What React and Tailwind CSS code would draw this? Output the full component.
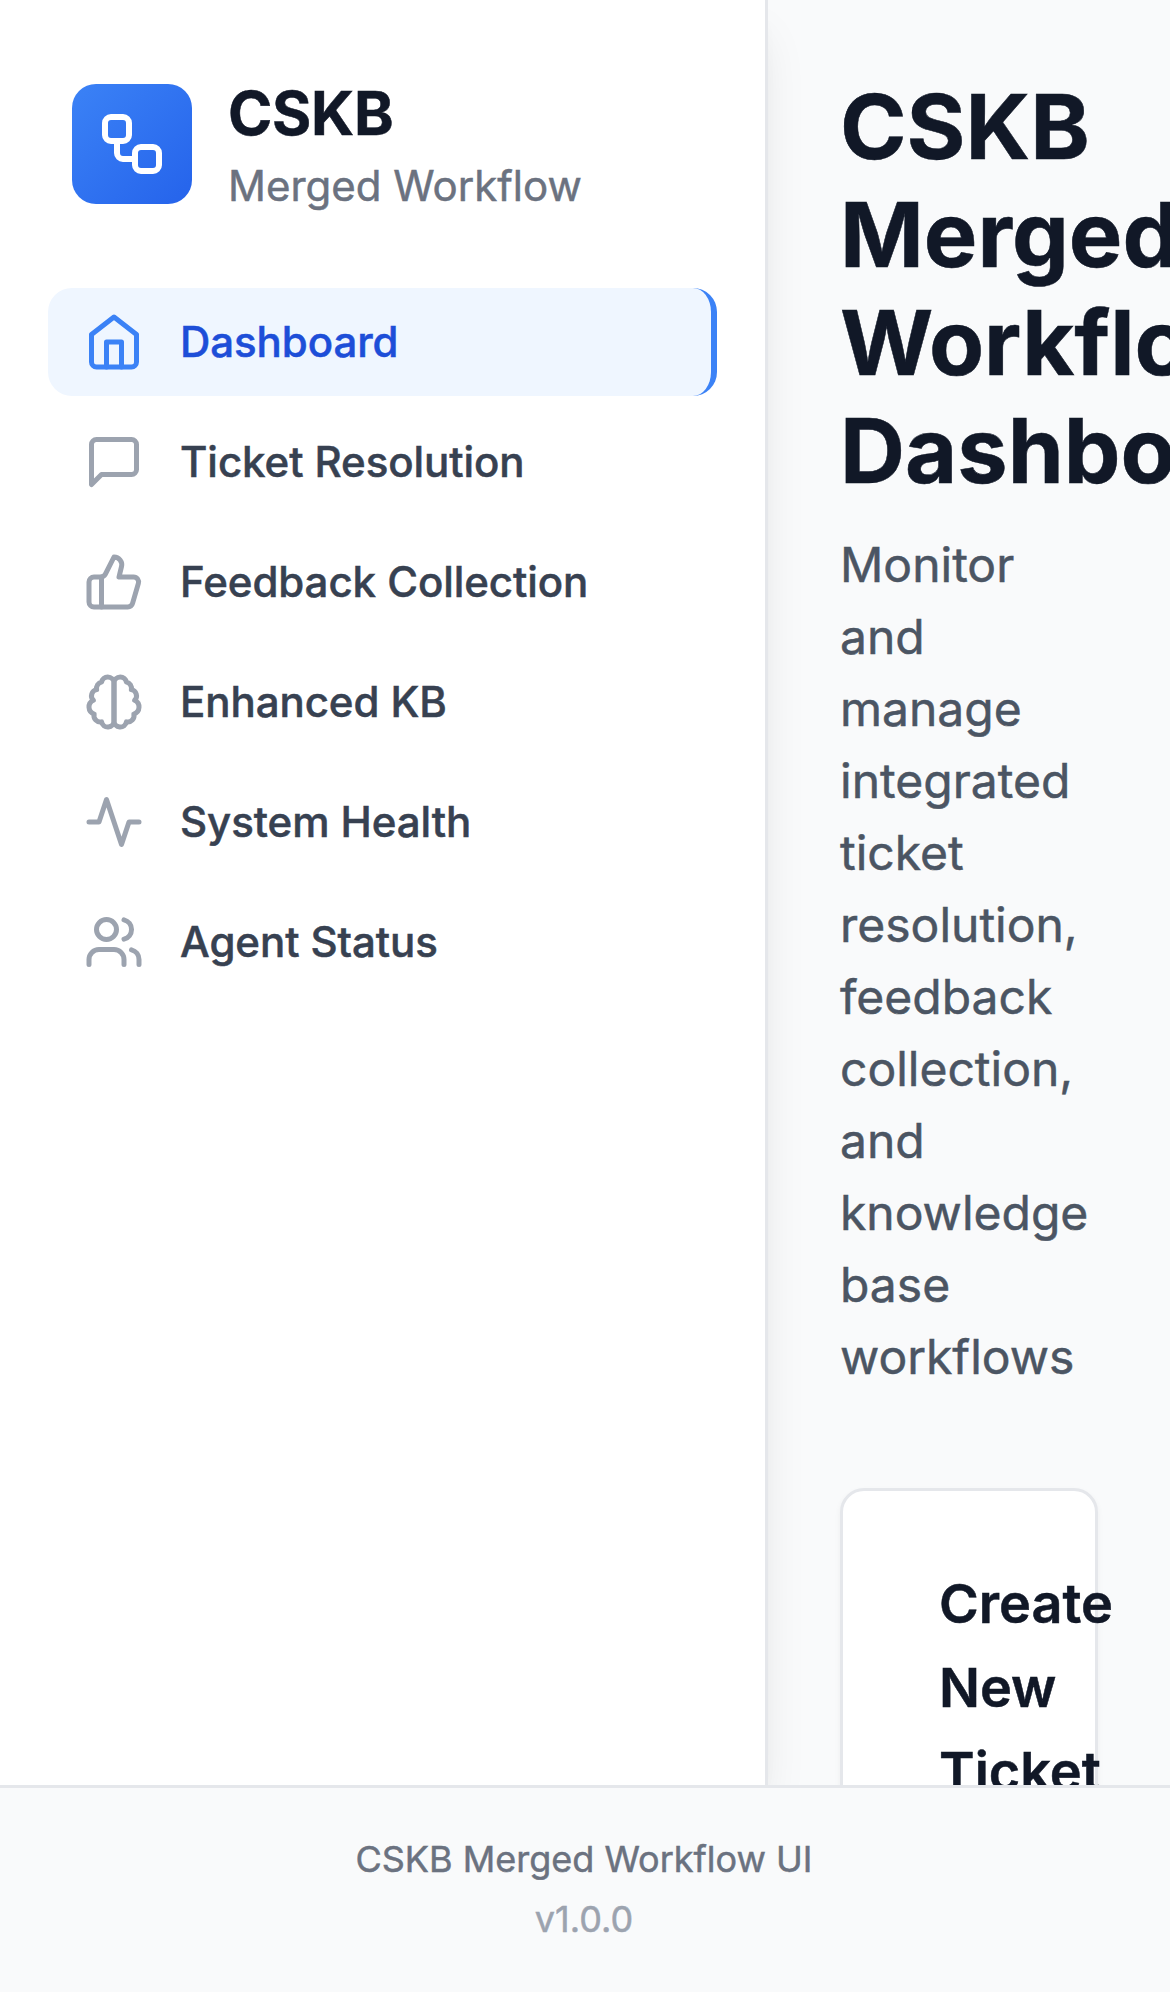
const NAV_ITEMS = [
  {
    label: "Dashboard",
    active: true,
    icon: (
      <>
        <path d="m3 9 9-7 9 7v11a2 2 0 0 1-2 2H5a2 2 0 0 1-2-2z" />
        <polyline points="9 22 9 12 15 12 15 22" />
      </>
    ),
  },
  {
    label: "Ticket Resolution",
    icon: <path d="M21 15a2 2 0 0 1-2 2H7l-4 4V5a2 2 0 0 1 2-2h14a2 2 0 0 1 2 2z" />,
  },
  {
    label: "Feedback Collection",
    icon: (
      <>
        <path d="M7 10v12" />
        <path d="M15 5.88 14 10h5.83a2 2 0 0 1 1.92 2.56l-2.33 8A2 2 0 0 1 17.5 22H4a2 2 0 0 1-2-2v-8a2 2 0 0 1 2-2h2.76a2 2 0 0 0 1.79-1.11L12 2h0a3.13 3.13 0 0 1 3 3.88Z" />
      </>
    ),
  },
  {
    label: "Enhanced KB",
    icon: (
      <>
        <path d="M9.5 2A2.5 2.5 0 0 1 12 4.5v15a2.5 2.5 0 0 1-4.96.44 2.5 2.5 0 0 1-2.96-3.08 3 3 0 0 1-.34-5.58 2.5 2.5 0 0 1 1.32-4.24 2.5 2.5 0 0 1 1.98-3A2.5 2.5 0 0 1 9.5 2Z" />
        <path d="M14.5 2A2.5 2.5 0 0 0 12 4.5v15a2.5 2.5 0 0 0 4.96.44 2.5 2.5 0 0 0 2.96-3.08 3 3 0 0 0 .34-5.58 2.5 2.5 0 0 0-1.32-4.24 2.5 2.5 0 0 0-1.98-3A2.5 2.5 0 0 0 14.5 2Z" />
      </>
    ),
  },
  {
    label: "System Health",
    icon: <path d="M22 12h-4l-3 9L9 3l-3 9H2" />,
  },
  {
    label: "Agent Status",
    icon: (
      <>
        <path d="M16 21v-2a4 4 0 0 0-4-4H6a4 4 0 0 0-4 4v2" />
        <circle cx="9" cy="7" r="4" />
        <path d="M22 21v-2a4 4 0 0 0-3-3.87" />
        <path d="M16 3.13a4 4 0 0 1 0 7.75" />
      </>
    ),
  },
];

function Icon({ className, children }) {
  return (
    <svg
      viewBox="0 0 24 24"
      fill="none"
      stroke="currentColor"
      strokeWidth="2"
      strokeLinecap="round"
      strokeLinejoin="round"
      className={className}
    >
      {children}
    </svg>
  );
}

function NavItem({ label, icon, active }) {
  return (
    <a
      className={
        active
          ? "flex items-center rounded-3xl border-r-6 border-[#3b82f6] bg-[#eff6ff] px-9 py-6 text-[42px] leading-[60px] font-medium tracking-[-0.06px] text-[#1d4ed8]"
          : "flex items-center rounded-3xl px-9 py-6 text-[42px] leading-[60px] font-medium tracking-[-0.06px] text-[#374151]"
      }
    >
      <Icon className={active ? "mr-9 size-15 shrink-0 text-[#3b82f6]" : "mr-9 size-15 shrink-0 text-[#9ca3af]"}>
        {icon}
      </Icon>
      {label}
    </a>
  );
}

function Sidebar() {
  return (
    <aside className="z-10 flex w-[768px] shrink-0 flex-col border-r-3 border-[#e5e7eb] bg-white shadow-[0_30px_45px_-9px_rgba(0,0,0,0.1),0_12px_18px_-12px_rgba(0,0,0,0.1)]">
      <div className="flex items-center gap-9 p-18">
        <div className="flex size-30 items-center justify-center rounded-3xl bg-linear-to-br/srgb from-[#3b82f6] to-[#2563eb]">
          <Icon className="size-18 text-white">
            <rect width="8" height="8" x="3" y="3" rx="2" />
            <path d="M7 11v4a2 2 0 0 0 2 2h4" />
            <rect width="8" height="8" x="13" y="13" rx="2" />
          </Icon>
        </div>
        <div>
          <h2 className="-mt-px mb-px text-[60px] leading-[84px] font-bold tracking-[-0.3px] text-[#111827]">CSKB</h2>
          <p className="text-[42px] leading-[60px] text-[#6b7280]">Merged Workflow</p>
        </div>
      </div>
      <nav className="flex flex-col gap-3 px-12">
        {NAV_ITEMS.map((item) => (
          <NavItem key={item.label} {...item} />
        ))}
      </nav>
    </aside>
  );
}

export default function App() {
  return (
    <div className="flex h-[1992px] w-[1170px] flex-col overflow-hidden bg-[#f9fafb] font-['Inter',sans-serif] [-webkit-text-stroke:0.5px_currentColor]">
      <div className="flex min-h-0 flex-1 overflow-hidden">
        <Sidebar />
        <main className="min-w-0 flex-1 overflow-hidden px-18 pt-[73px]">
          <h1 className="text-[90px] leading-[108px] font-bold text-[#111827]">
            CSKB Merged Workflow Dashboard
          </h1>
          <p className="mt-6 text-[48px] leading-[72px] text-[#4b5563]">
            Monitor and manage integrated ticket resolution, feedback collection, and knowledge base workflows
          </p>
          <section className="mt-[95px] rounded-3xl border-3 border-[#e5e7eb] bg-white px-24 pt-[71px] pb-18 shadow-[0_3px_6px_0_rgba(0,0,0,0.05)]">
            <h3 className="text-[54px] leading-[84px] font-semibold text-[#111827]">Create New Ticket</h3>
          </section>
        </main>
      </div>
      <footer className="z-20 shrink-0 border-t-3 border-[#e5e7eb] bg-[#f9fafb] pt-[47px] pr-[50px] pb-[49px] pl-12 text-center text-[36px] leading-[48px]">
        <p className="text-[#6b7280]">CSKB Merged Workflow UI</p>
        <p className="mt-3 text-[#9ca3af]">v1.0.0</p>
      </footer>
    </div>
  );
}
